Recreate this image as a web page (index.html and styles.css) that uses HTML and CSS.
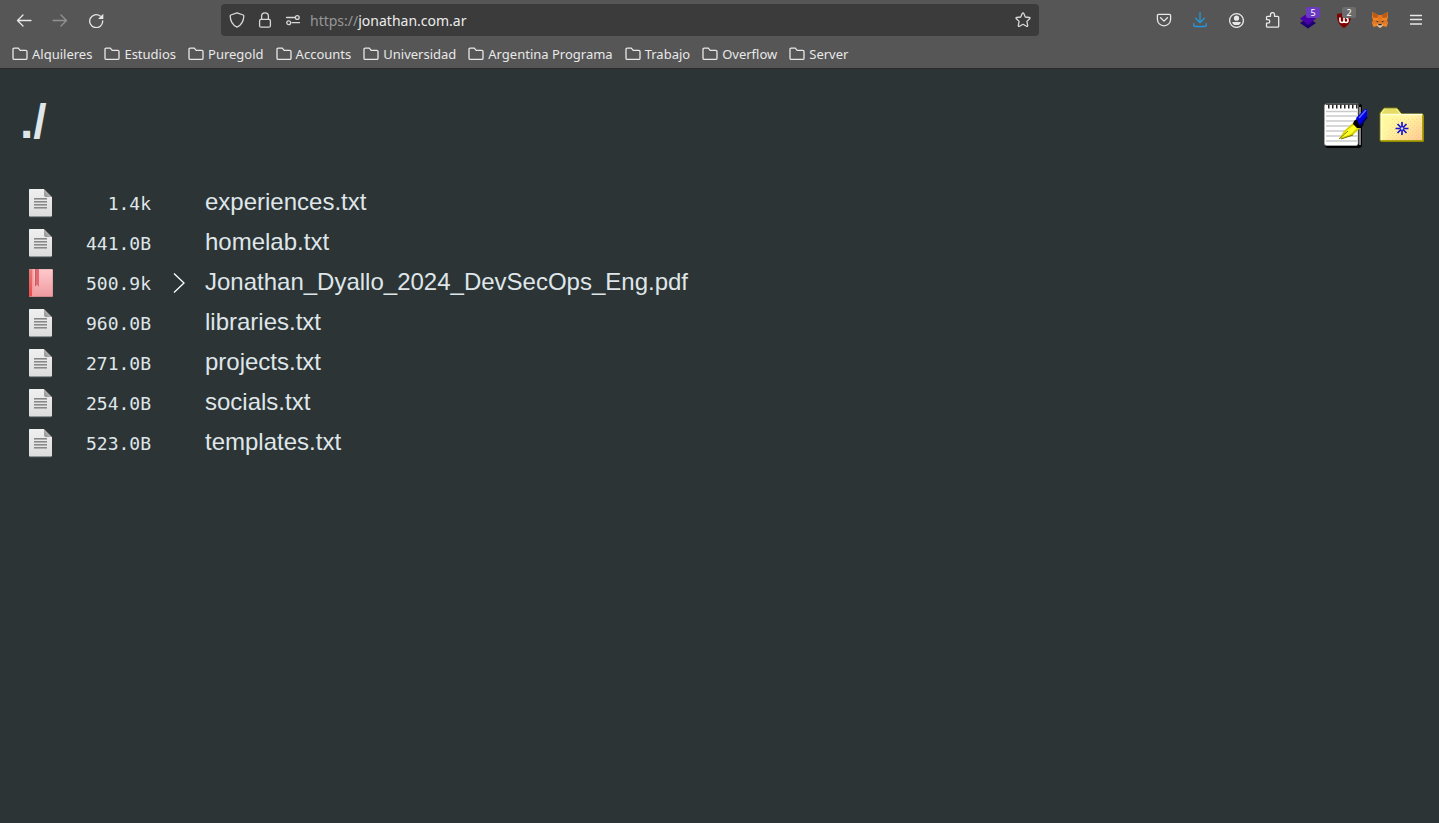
FILE: index.html
```html
<!DOCTYPE html>
<html lang="en">
<head>
<meta charset="utf-8">
<meta name="viewport" content="width=device-width, initial-scale=1">
<title>./</title>
<link rel="stylesheet" href="styles.css">
</head>
<body>
<svg class="sprite" aria-hidden="true">
  <defs>
    <linearGradient id="paper" x1="0" y1="0" x2="0" y2="1"><stop offset="0" stop-color="#f0f0f0"/><stop offset="1" stop-color="#dcdcdc"/></linearGradient>
    <linearGradient id="pink" x1="0" y1="0" x2="0" y2="1"><stop offset="0" stop-color="#ffc9ce"/><stop offset="1" stop-color="#ee9ba0"/></linearGradient>
    <linearGradient id="spine" x1="0" y1="0" x2="0" y2="1"><stop offset="0" stop-color="#e77a7a"/><stop offset="1" stop-color="#ee4a4a"/></linearGradient>
    <linearGradient id="fold" x1="0" y1="1" x2="1" y2="0"><stop offset="0" stop-color="#8a8a8a"/><stop offset=".5" stop-color="#b4b4b4"/><stop offset="1" stop-color="#8a8a8a"/></linearGradient>
    <linearGradient id="manila" x1="0" y1="0" x2="1" y2="1"><stop offset="0" stop-color="#ffff9c"/><stop offset=".5" stop-color="#fff2a0"/><stop offset="1" stop-color="#ffc890"/></linearGradient>
    <pattern id="grain" width="4" height="4" patternUnits="userSpaceOnUse"><path d="M0 0h1v1H0zM2 2h1v1H2z" fill="#ffb080" opacity=".4"/></pattern>
  </defs>
  <symbol id="folder" viewBox="0 0 16 16"><path d="M2.200 13.400h11.600c.7 0 1.200-.5 1.200-1.200V5.600c0-.7-.5-1.200-1.200-1.200H8.200L6.300 2.200H2.200c-.7 0-1.200.5-1.200 1.200v8.800c0 .7.5 1.200 1.200 1.200z" fill="none" stroke="currentColor" stroke-width="1.300"/></symbol>
  <symbol id="doc" viewBox="0 0 25 30">
    <path d="M1.500 1h14.500l8 8v18.500q0 1-1 1H2q-1 0-1-1V1.500q0-.5.500-.500z" fill="url(#paper)"/>
    <path d="M1.500 28.700h22" stroke="#969b9b" stroke-width=".8"/>
    <path d="M16 1l8 8h-6.500q-1.500-.5-1.500-2z" fill="url(#fold)"/>
    <path d="M16 1l8 8" stroke="#606566" stroke-width=".8"/>
    <path d="M6 10h13v1H6zM6 13h13v1H6zM6 16h13v1H6zM6 19h13v1H6z" fill="#888"/><path d="M6 11.500h13M6 14.500h13M6 17.500h13M6 20.500h13" stroke="#b0b0b0"/>
  </symbol>
  <symbol id="book" viewBox="0 0 25 30">
    <rect x="1" y="1" width="24" height="28" rx=".8" fill="#c58388"/>
    <rect x="1" y="1.200" width="23.600" height="27" rx=".8" fill="url(#pink)"/>
    <path d="M1 1.200h3v27H1z" fill="url(#spine)"/>
    <path d="M4 1.200h1.500v27H4z" fill="#f79a9e"/>
    <path d="M7 1h4v18l-2-2.500L7 19z" fill="#e06a70"/>
    <path d="M7.500 1v17" stroke="#b85a60" stroke-width=".7"/>
  </symbol>
</svg>

<header class="chrome">
  <div class="toolbar">
    <nav class="nav" aria-label="Navigation">
      <button class="tool" aria-label="Back"><svg viewBox="0 0 16 16"><path d="M15 8.500H1.800M7 3L1.500 8.500 7 14"/></svg></button>
      <button class="tool" aria-label="Forward" disabled><svg viewBox="0 0 16 16"><path d="M1 8.500h13.200M9 3L14.500 8.500 9 14"/></svg></button>
      <button class="tool" aria-label="Reload"><svg viewBox="0 0 16 16"><path d="M14.700 9A6.500 6.500 0 1 1 12.200 4"/><path d="M15.300 1.800V7h-5.200z" class="solid"/></svg></button>
    </nav>
    <div class="urlbar">
      <svg class="icon" viewBox="0 0 16 16"><path d="M8 .9L14.200 3q.6.200.6.900C14.700 8.500 12.800 12.700 8 15.200 3.200 12.700 1.300 8.500 1.200 3.900q0-.7.600-.9z"/></svg>
      <svg class="icon" viewBox="0 0 16 16"><path d="M4.600 7.200V4.200a3.400 3.400 0 0 1 6.800 0v3"/><rect x="2.600" y="7.400" width="10.800" height="7.800" rx="1.500"/></svg>
      <svg class="icon" viewBox="0 0 16 16"><path d="M1.500 5.500h8.500M7 10.700h7.500"/><circle cx="12.300" cy="5.500" r="1.900"/><circle cx="3.700" cy="10.700" r="1.900"/></svg>
      <div class="address"><span class="scheme">https://</span>jonathan.com.ar</div>
      <button class="star" aria-label="Bookmark this page"><svg viewBox="0 0 16 16"><path d="M8 .9q.5 0 .8.600l1.500 3.500 4 .5q1.200.3.400 1.200L11.900 9.400l.8 4.100q0 1.300-1.200.8L8 12.300l-3.500 2q-1.200.5-1.200-.8l.8-4.100L1.300 6.700Q.5 5.800 1.700 5.500l4-.5L7.200 1.500Q7.500.9 8 .9z"/></svg></button>
    </div>
    <div class="tools">
      <button class="tool" aria-label="Pocket"><svg viewBox="0 0 16 16"><path d="M2.700 2.300h10.600q1.300 0 1.300 1.300v3.600a6.600 6.600 0 0 1-13.200 0V3.600q0-1.300 1.300-1.300zM4.600 5.800L8 9.100l3.400-3.300"/></svg></button>
      <button class="tool download" aria-label="Downloads"><svg viewBox="0 0 16 16"><path d="M8 .5v10M3.600 6.300L8 10.700l4.400-4.400M1.800 11.500v1.700q0 1.300 1.300 1.300h9.800q1.300 0 1.300-1.300v-1.700"/></svg></button>
      <button class="tool" aria-label="Account"><svg viewBox="0 0 16 16"><circle cx="8.500" cy="8.500" r="6.900"/><circle cx="8.500" cy="6.200" r="2.600" class="solid"/><path d="M4.300 9.900h8.400q.2 3-4.200 3.200-4.400-.2-4.200-3.200z" class="solid"/></svg></button>
      <button class="tool" aria-label="Extensions"><svg viewBox="0 0 16 16"><path d="M2.500 5.300q0-1 1-1h3V2.600a2 2 0 0 1 4 0v1.700h3.200q1 0 1 1v8.900q0 1-1 1H3.500q-1 0-1-1v-3H4a1.700 1.700 0 0 0 0-3.600H2.500z"/></svg></button>
      <button class="tool extension" aria-label="Containers, 5"><svg viewBox="0 0 18 18"><path d="M1 12l8-5 8 5-8 5.500z" fill="#1c006f" stroke="none"/><path d="M1 7.500L9 2l8 5.500L9 14z" fill="#4a00a8" stroke="none"/></svg><span class="badge violet">5</span></button>
      <button class="tool extension" aria-label="Content blocker, 2"><svg viewBox="0 0 18 18"><path d="M9 1q3 2 7 2c0 7-1.500 10.500-7 14C3.500 13.500 2 10 2 3q4 0 7-2z" fill="#800000" stroke="none"/><path d="M5 7v2.500a2 2 0 0 0 4 0V7m0 2.500a2 2 0 0 0 4 0q0-2.500-1.500-2.500" stroke="#fff" stroke-width="1.600"/></svg><span class="badge gray">2</span></button>
      <button class="tool extension" aria-label="Wallet"><svg viewBox="0 0 18 18"><g stroke="none"><path d="M1.500 1L7 4h4l5.500-3 .5 5-1 3 1 3-1.500 4-3.500-1-2 1.500H8L6 15l-3.500 1L1 12l1-3-1-3z" fill="#f5841f"/><path d="M1.500 1L7 4l-.5 3L2 6.500zM16.500 1L11 4l.5 3 4.500-.5z" fill="#ba5b18"/><path d="M7 4h4l-.5 8h-3zM2 9l4 1 1 3-5-.5zM16 9l-4 1-1 3 5-.5z" fill="#e27625"/><path d="M4.500 9.500l3 .8-.5 1.500zM13.500 9.500l-3 .8.5 1.500z" fill="#36383b"/><path d="M6 14l2-1.500h2l2 1.500-2 2.500H8z" fill="#d5c9bb"/><path d="M7.500 12.800h3l.3 1.500H7.200z" fill="#28251f"/></g></svg></button>
      <button class="tool" aria-label="Menu"><svg viewBox="0 0 16 16"><path d="M2.500 3.500h11M2.500 7.500h11M2.500 12h11"/></svg></button>
    </div>
  </div>
  <nav class="bookmarks" aria-label="Bookmarks">
    <a href="#"><svg><use href="#folder"/></svg>Alquileres</a>
    <a href="#"><svg><use href="#folder"/></svg>Estudios</a>
    <a href="#"><svg><use href="#folder"/></svg>Puregold</a>
    <a href="#"><svg><use href="#folder"/></svg>Accounts</a>
    <a href="#"><svg><use href="#folder"/></svg>Universidad</a>
    <a href="#"><svg><use href="#folder"/></svg>Argentina Programa</a>
    <a href="#"><svg><use href="#folder"/></svg>Trabajo</a>
    <a href="#"><svg><use href="#folder"/></svg>Overflow</a>
    <a href="#"><svg><use href="#folder"/></svg>Server</a>
  </nav>
</header>

<main class="page">
  <div class="heading">
    <h1>./</h1>
    <div class="actions">
      <button aria-label="New file"><svg viewBox="0 0 48 48">
        <path d="M4 3h34q2 0 2 2v39q0 3-3 3H6q-3 0-3-3V5z" fill="#000"/><path d="M37 6h2v38h-2z" fill="#858585"/>
        <path d="M2.500 5q0-2 2-2H36v39.500q0 2-2 2H4.500q-2 0-2-2z" fill="#fff" stroke="#aaa" stroke-width=".8"/>
        <path d="M4 10.500h31M4 15h31M4 20h31M4 25h31M4 30h31M4 35h31M4 40h31" stroke="#cacaca" stroke-width="1.500"/>
        <path d="M6 5.500h30" stroke="#222" stroke-width="4" stroke-dasharray="1.500 2.500"/><path d="M4 3.300h34" stroke="#333"/>
        <path d="M17 38l5-8 10-9 6 6-8 8z" fill="#d8d000"/><path d="M18 37l6-7 8-6 3 3-6 6z" fill="#ffff28"/><path d="M17 38l9-8M19 38l12-4" fill="none" stroke="#777700"/>
        <path d="M32 20l4-3 6 6-3 4h-4l-4-4z" fill="#000"/><path d="M34 17l9-9h2v8l-7 9z" fill="#0000e6"/><path d="M37 17l7-8" stroke="#5a6aff" stroke-width="1.500"/><path d="M45 16l-7 9" stroke="#000060" stroke-width="2"/>
      </svg></button>
      <button aria-label="New folder"><svg viewBox="0 0 48 48">
        <path d="M3 41V13l4-6h13l5 6h20l1 1v27z" fill="#222200"/>
        <path d="M2 40V12l4-5h13l5 6h21v27z" fill="url(#manila)" stroke="#777700"/>
        <path d="M4 12l3-4h11l4 5H4z" fill="#e5dc65"/><path d="M3.500 39V13.500h41" fill="none" stroke="#ffffd8" stroke-width="1.500"/>
        <path d="M14 17h30v22H8z" fill="url(#grain)"/><path d="M45 14v26H3" fill="none" stroke="#aaa000" stroke-width="1.500"/>
        <path d="M24 21v13M17.500 27.500h13M19.500 23l9 9M28.500 23l-9 9" stroke="#1515d5" stroke-width="1.700"/><circle cx="24" cy="27.500" r="1.300" fill="#e8e0b0"/>
      </svg></button>
    </div>
  </div>
  <table class="files">
    <tbody>
      <tr><td class="kind"><svg><use href="#doc"/></svg></td><td class="size">1.4k</td><td class="mark"></td><td class="name"><a href="#">experiences.txt</a></td></tr>
      <tr><td class="kind"><svg><use href="#doc"/></svg></td><td class="size">441.0B</td><td class="mark"></td><td class="name"><a href="#">homelab.txt</a></td></tr>
      <tr><td class="kind"><svg><use href="#book"/></svg></td><td class="size">500.9k</td><td class="mark"><svg class="chevron" viewBox="0 0 12 20"><path d="M1 .5L11 10 1 19.500"/></svg></td><td class="name"><a href="#">Jonathan_Dyallo_2024_DevSecOps_Eng.pdf</a></td></tr>
      <tr><td class="kind"><svg><use href="#doc"/></svg></td><td class="size">960.0B</td><td class="mark"></td><td class="name"><a href="#">libraries.txt</a></td></tr>
      <tr><td class="kind"><svg><use href="#doc"/></svg></td><td class="size">271.0B</td><td class="mark"></td><td class="name"><a href="#">projects.txt</a></td></tr>
      <tr><td class="kind"><svg><use href="#doc"/></svg></td><td class="size">254.0B</td><td class="mark"></td><td class="name"><a href="#">socials.txt</a></td></tr>
      <tr><td class="kind"><svg><use href="#doc"/></svg></td><td class="size">523.0B</td><td class="mark"></td><td class="name"><a href="#">templates.txt</a></td></tr>
    </tbody>
  </table>
</main>
</body>
</html>
```

FILE: styles.css
```css
* { box-sizing: border-box; }

body {
  margin: 0;
  min-height: 100vh;
  background: #2d3436;
  color: #dfe6e9;
  font-family: "Liberation Sans", Arial, sans-serif;
}

button {
  padding: 0;
  border: 0;
  background: none;
  color: inherit;
  font: inherit;
}

a { color: inherit; text-decoration: none; }
svg { display: block; flex: none; }
.sprite { position: absolute; width: 0; height: 0; }

/* Browser chrome */
.chrome {
  background: #565656;
  border-bottom: 1px solid #2a2a2a;
  color: #e8e8e8;
  font-family: "Noto Sans", sans-serif;
}

.toolbar {
  display: grid;
  grid-template-columns: 221px minmax(0, 1fr) 400px;
  align-items: center;
  height: 40px;
}

.nav, .tools { display: flex; }
.nav { padding-left: 6px; }
.tools { justify-content: flex-end; padding-right: 5px; }

.tool {
  position: relative;
  display: grid;
  place-items: center;
  width: 36px;
  height: 36px;
}

.tool:disabled { color: #929292; }
.tool.download { color: #2597d8; }

.tool svg, .urlbar svg {
  width: 16px;
  height: 16px;
  fill: none;
  stroke: currentColor;
  stroke-width: 1.3;
  stroke-linecap: round;
  stroke-linejoin: round;
}

.tool.extension svg { width: 18px; height: 18px; }
.tool svg .solid { fill: currentColor; stroke: none; }

.badge {
  position: absolute;
  top: 5px;
  right: 6px;
  width: 14px;
  height: 11px;
  border-radius: 2px;
  color: #fff;
  font-size: 9px;
  line-height: 11px;
  text-align: center;
}

.violet { background: #6a3bc0; }
.gray { background: #6c6c6c; }

.urlbar {
  display: flex;
  align-items: center;
  gap: 12px;
  height: 32px;
  padding: 0 8px;
  border-radius: 4px;
  background: #3b3b3b;
  color: #d8d8d8;
}

.address { flex: 1; margin-left: -3px; color: #ececec; font-size: 14px; }
.scheme { color: #979797; }

.bookmarks {
  display: flex;
  gap: 12px;
  height: 28px;
  padding-left: 12px;
  font-size: 13px;
  line-height: 28px;
  white-space: nowrap;
}

.bookmarks a { display: flex; align-items: center; gap: 4px; }
.bookmarks svg { width: 16px; height: 16px; }

/* Directory listing */
.page { padding: 20px 13px 20px 12px; }

.heading {
  display: flex;
  justify-content: space-between;
  align-items: flex-start;
  padding-left: 8px;
}

h1 { margin: 0; font-size: 48px; line-height: 66px; }
.actions { display: flex; gap: 8px; padding: 12px 0; }
.actions svg { width: 48px; height: 48px; }

.files {
  margin: 22px 0 0 16px;
  border-collapse: collapse;
  font-size: 24px;
  line-height: 38px;
}

.files td { height: 40px; padding: 0; }
.files .name { padding-bottom: 2px; }
.kind svg { width: 25px; height: 30px; }

.files .size {
  width: 98px;
  padding-top: 2px;
  text-align: right;
  font-family: "DejaVu Sans Mono", monospace;
  font-size: 18px;
}

.mark { width: 54px; }
.mark svg { margin-left: 22px; }
.chevron { width: 12px; height: 20px; fill: none; stroke: #fff; stroke-width: 1.3; }
```
